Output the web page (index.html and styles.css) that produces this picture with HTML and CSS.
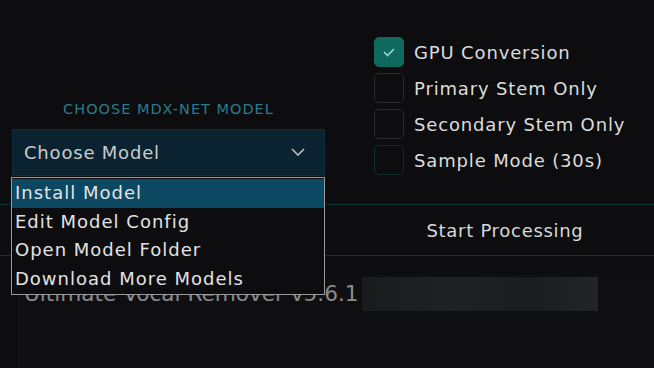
FILE: index.html
```html
<!DOCTYPE html>
<html lang="en">

<head>
    <meta charset="UTF-8">
    <title>Ultimate Vocal Remover</title>
    <link rel="stylesheet" href="styles.css">
</head>

<body>
    <div class="top">
        <!-- Model chooser -->
        <div class="model-col">
            <div class="model-label">CHOOSE MDX-NET MODEL</div>
            <div class="select-wrap">
                <div class="select">
                    <span>Choose Model</span>
                    <svg class="chevron" width="16" height="10" viewBox="0 0 16 10">
                        <path d="M2 2 L8 8 L14 2" fill="none" stroke="#b9bcbf" stroke-width="1.6" />
                    </svg>
                </div>
                <ul class="menu">
                    <li class="active">Install Model</li>
                    <li>Edit Model Config</li>
                    <li>Open Model Folder</li>
                    <li>Download More Models</li>
                </ul>
            </div>
        </div>

        <!-- Options -->
        <div class="options">
            <label class="check-row">
                <span class="box checked">
                    <svg width="14" height="10" viewBox="0 0 14 10">
                        <path d="M2 5 L5.5 8.5 L12 2" fill="none" stroke="#9fd3c8" stroke-width="1.6" />
                    </svg>
                </span>
                GPU Conversion
            </label>
            <label class="check-row"><span class="box"></span>Primary Stem Only</label>
            <label class="check-row"><span class="box"></span>Secondary Stem Only</label>
            <label class="check-row"><span class="box teal"></span>Sample Mode (30s)</label>
        </div>
    </div>

    <div class="process-row">
        <button class="start-btn">Start Processing</button>
    </div>

    <div class="console">
        <span class="console-text">Ultimate Vocal Remover v5.6.1</span>
        <span class="blurred"></span>
    </div>
</body>

</html>
```

FILE: styles.css
```css
body {
    margin: 0;
    background-color: #0d0d0f;
    font-family: "DejaVu Sans", sans-serif;
    color: #dcdcdc;
    width: 654px;
    height: 368px;
    overflow: hidden;
}

.top {
    display: flex;
    height: 204px;
}

.model-col {
    width: 313px;
    margin-left: 12px;
    padding-top: 100px;
}

.model-label {
    text-align: center;
    color: #2b7b8e;
    font-size: 14.5px;
    letter-spacing: 1px;
    line-height: 18px;
    height: 29px;
}

.select-wrap {
    position: relative;
}

.select {
    display: flex;
    align-items: center;
    justify-content: space-between;
    height: 45px;
    padding: 0 18px 0 11px;
    background-color: #0b2330;
    border: 1px solid #0f2c3a;
    font-size: 18px;
    letter-spacing: 0.8px;
    color: #c9cbcc;
}

.chevron {
    margin-top: -2px;
}

.menu {
    position: absolute;
    top: 48px;
    left: -1px;
    width: 312px;
    margin: 0;
    padding: 1px 0;
    list-style: none;
    background-color: #0d0d0f;
    border: 1px solid #9a9a9a;
    z-index: 2;
}

.menu li {
    height: 28.5px;
    line-height: 28px;
    padding-left: 3px;
    font-size: 18px;
    letter-spacing: 1px;
    color: #e2e2e2;
}

.menu li.active {
    background-color: #0c4862;
}

.options {
    margin-left: 49px;
    padding-top: 37px;
    display: flex;
    flex-direction: column;
    gap: 6px;
}

.check-row {
    display: flex;
    align-items: center;
    gap: 10px;
    height: 30px;
    font-size: 18px;
    letter-spacing: 0.85px;
    color: #dcdcdc;
}

.box {
    width: 28px;
    height: 28px;
    border: 1px solid #2a2b2c;
    border-radius: 5px;
    display: flex;
    align-items: center;
    justify-content: center;
}

.box.checked {
    background-color: #0f6a5d;
    border-color: #0f6a5d;
}

.box.teal {
    border-color: #10302e;
}

.process-row {
    height: 50px;
    border-top: 1px solid #0d3735;
    border-bottom: 1px solid #0d3735;
    display: flex;
    justify-content: flex-end;
}

.start-btn {
    width: 298px;
    background: none;
    border: none;
    color: #d8d8d8;
    font-family: inherit;
    font-size: 18px;
    letter-spacing: 0.7px;
}

.console {
    margin: 19px 0 0 19px;
    height: 94px;
    background-color: #0f0f11;
    border-left: 1px solid #17171a;
    display: flex;
    align-items: flex-start;
    padding: 2px 0 0 4px;
}

.console-text {
    font-size: 21.6px;
    color: #8a8a8a;
    line-height: 34px;
}

.blurred {
    width: 236px;
    height: 34px;
    margin-left: 3px;
    background: linear-gradient(90deg, #1a1b1d, #202124 40%, #1b1c1e 70%, #232426);
}
```
